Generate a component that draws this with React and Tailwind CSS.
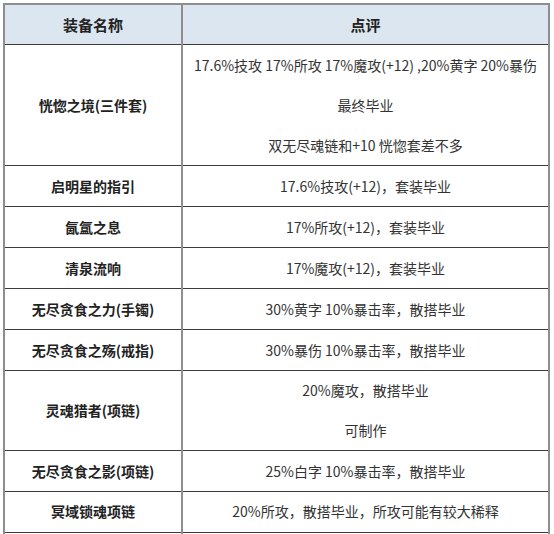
const rows = [
  {
    name: "恍惚之境(三件套)",
    lines: ["17.6%技攻 17%所攻 17%魔攻(+12) ,20%黄字 20%暴伤", "最终毕业", "双无尽魂链和+10 恍惚套差不多"],
  },
  { name: "启明星的指引", lines: ["17.6%技攻(+12)，套装毕业"] },
  { name: "氤氲之息", lines: ["17%所攻(+12)，套装毕业"] },
  { name: "清泉流响", lines: ["17%魔攻(+12)，套装毕业"] },
  { name: "无尽贪食之力(手镯)", lines: ["30%黄字 10%暴击率，散搭毕业"] },
  { name: "无尽贪食之殇(戒指)", lines: ["30%暴伤 10%暴击率，散搭毕业"] },
  { name: "灵魂猎者(项链)", lines: ["20%魔攻，散搭毕业", "可制作"], short: true },
  { name: "无尽贪食之影(项链)", lines: ["25%白字 10%暴击率，散搭毕业"] },
  { name: "冥域锁魂项链", lines: ["20%所攻，散搭毕业，所攻可能有较大稀释"], short: true },
  { name: "", lines: [""] },
];

const cell =
  "border-x-2 border-x-[#8e8e8e] border-y border-y-[#3c3c3c] text-center align-middle p-0";

export default function App() {
  return (
    <div
      className="bg-white w-[554px] h-[534px] overflow-hidden pl-[3px] pt-[3px]"
      style={{ fontFamily: '"Microsoft YaHei", "Noto Sans CJK SC", sans-serif' }}
    >
      <table className="w-[547px] table-fixed border-collapse text-[14px] text-[#333]">
        <colgroup>
          <col className="w-[178px]" />
          <col />
        </colgroup>
        <thead>
          <tr className="bg-[#dce6f1]">
            <th className={`${cell} border-t-2 border-t-[#8e8e8e] font-bold text-[#222] text-[15px] leading-[39px]`}>装备名称</th>
            <th className={`${cell} border-t-2 border-t-[#8e8e8e] font-bold text-[#222] text-[15px] leading-[39px]`}>点评</th>
          </tr>
        </thead>
        <tbody>
          {rows.map((row, index) => (
            <tr key={index}>
              <td className={`${cell} font-bold text-[#222]`}>{row.name}</td>
              <td className={cell}>
                {row.lines.map((line, i) => (
                  <div
                    key={i}
                    className={
                      row.short
                        ? "h-[39.5px] leading-[39.5px] whitespace-nowrap"
                        : "h-[40px] leading-[40px] whitespace-nowrap"
                    }
                  >
                    {line}
                  </div>
                ))}
              </td>
            </tr>
          ))}
        </tbody>
      </table>
    </div>
  );
}
